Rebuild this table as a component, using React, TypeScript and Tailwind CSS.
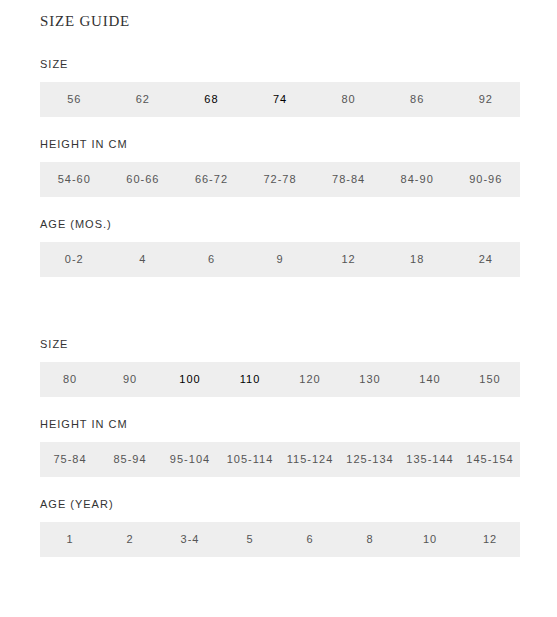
import React from 'react';

interface Row {
  label: string;
  values: string[];
  bold?: string[];
}

const sections: Row[][] = [
  [
    { label: 'SIZE', values: ['56', '62', '68', '74', '80', '86', '92'], bold: ['68', '74'] },
    { label: 'HEIGHT IN CM', values: ['54-60', '60-66', '66-72', '72-78', '78-84', '84-90', '90-96'] },
    { label: 'AGE (MOS.)', values: ['0-2', '4', '6', '9', '12', '18', '24'] },
  ],
  [
    { label: 'SIZE', values: ['80', '90', '100', '110', '120', '130', '140', '150'], bold: ['100', '110'] },
    { label: 'HEIGHT IN CM', values: ['75-84', '85-94', '95-104', '105-114', '115-124', '125-134', '135-144', '145-154'] },
    { label: 'AGE (YEAR)', values: ['1', '2', '3-4', '5', '6', '8', '10', '12'] },
  ],
];

function SizeRow({ row, first }: { row: Row; first: boolean }) {
  return (
    <div className={first ? 'mt-[25px]' : 'mt-[19px]'}>
      <div className="h-4 leading-4 text-[11px] tracking-[1px] text-[#333]">{row.label}</div>
      <div className="mt-[10px] h-[35px] bg-[#eeeeee] flex">
        {row.values.map((v) => (
          <div
            key={v}
            className={`flex-1 flex items-center justify-center text-[11px] tracking-[1px] ${
              row.bold?.includes(v) ? 'text-black' : 'text-[#555]'
            }`}
          >
            {v}
          </div>
        ))}
      </div>
    </div>
  );
}

export default function App() {
  return (
    <div className="min-h-screen bg-white px-10 pt-[11px]" style={{ fontFamily: '"Liberation Sans", Arial, sans-serif' }}>
      <div className="w-[480px]">
        <h1 className="h-5 leading-5 text-[15px] tracking-[0.8px] text-[#333] font-['Liberation_Serif',serif]">SIZE GUIDE</h1>
        {sections.map((rows, si) => (
          <div key={si} className={si > 0 ? 'pt-[34px]' : ''}>
            {rows.map((row, ri) => (
              <SizeRow key={row.label} row={row} first={ri === 0} />
            ))}
          </div>
        ))}
      </div>
    </div>
  );
}
